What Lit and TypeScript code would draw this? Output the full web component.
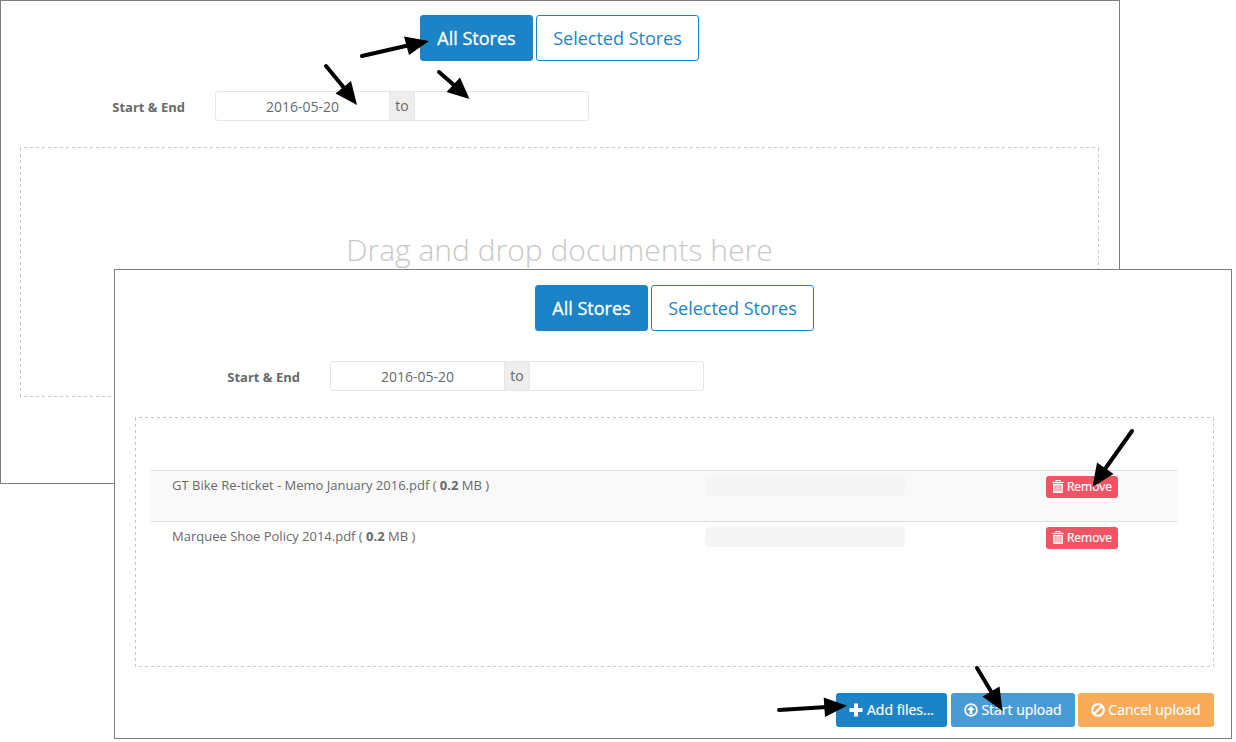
import { LitElement, html, css, svg, nothing } from "lit";
import { customElement, property } from "lit/decorators.js";

interface UploadFile {
  name: string;
  size: string;
}

const trashIcon = html`<svg class="icon" width="12" height="13" viewBox="0 0 12 13">
  <path d="M3.9 2V.5h4.2V2" fill="none" stroke="currentColor" />
  <path d="M.3 1.9h11.4V3H.3z" fill="currentColor" />
  <path d="M1 3.8h10l-.3 9.2H1.3z" fill="currentColor" />
  <path d="M3.1 5v6.6M5 5v6.6M7 5v6.6M8.9 5v6.6" stroke="#ed5565" stroke-width=".8" />
</svg>`;
const plusIcon = html`<svg class="icon" width="14" height="14" viewBox="0 0 14 14">
  <path d="M5 .5h4V5h4.5v4H9v4.5H5V9H.5V5H5z" fill="currentColor" />
</svg>`;
const uploadIcon = html`<svg class="icon" width="14" height="14" viewBox="0 0 14 14">
  <circle cx="7" cy="7" r="5.9" fill="none" stroke="currentColor" stroke-width="1.8" />
  <path d="M7 2.9 10.8 7H8.4v3.9H5.6V7H3.2z" fill="currentColor" />
</svg>`;
const banIcon = html`<svg class="icon" width="14" height="14" viewBox="0 0 14 14">
  <circle cx="7" cy="7" r="5.8" fill="none" stroke="currentColor" stroke-width="2.2" />
  <path d="M3.2 10.8 10.8 3.2" stroke="currentColor" stroke-width="2.2" />
</svg>`;

@customElement("upload-panel")
export class UploadPanel extends LitElement {
  @property({ attribute: false }) files: UploadFile[] = [];

  static styles = css`
    :host {
      display: block;
      box-sizing: border-box;
      border: 1px solid #7f7f7f;
      background: #fff;
      color: #676a6c;
      font: 13px/18.57px "Open Sans", sans-serif;
    }
    * { box-sizing: border-box; }
    .stores { display: flex; justify-content: center; gap: 3px; }
    button {
      font-family: inherit;
      margin: 0;
      padding: 0;
      border: 1px solid transparent;
      border-radius: 3px;
      color: #fff;
      display: flex;
      align-items: center;
      justify-content: center;
      white-space: nowrap;
      -webkit-text-stroke: 0.2px currentColor;
    }
    .store { height: 46px; width: 163px; font-size: 18px; background: #fff; color: #1c84c6; border-color: #1c84c6; -webkit-text-stroke: 0; }
    .store.active { width: 113px; background: #1c84c6; color: #fff; -webkit-text-stroke: 0.3px #fff; }
    .dates { display: flex; align-items: center; height: 30px; margin-top: 30px; }
    .label { width: 165px; text-align: right; font-weight: 700; margin-right: 30px; padding-top: 2px; }
    .range {
      display: flex;
      width: 374px;
      height: 30px;
      border: 1px solid #e5e6e7;
      border-radius: 3px;
      background: #fff;
      font-size: 14px;
      line-height: 28px;
      text-align: center;
    }
    .date { flex: 1; padding-top: 1px; }
    .to { width: 26px; background: #eee; border: solid #e5e6e7; border-width: 0 1px; }
    .zone {
      --across: repeating-linear-gradient(90deg, #c8c8c8 0 1px, transparent 1px 4px, #c8c8c8 4px 6px);
      --down: repeating-linear-gradient(180deg, transparent 0 1px, #c8c8c8 1px 4px, transparent 4px 6px);
      height: 250px;
      margin-top: 26px;
      background:
        var(--across) top / 100% 1px no-repeat,
        var(--across) bottom / 100% 1px no-repeat,
        var(--down) left / 1px 100% no-repeat,
        var(--down) right / 1px 100% no-repeat;
      padding: 53px 37px 0 16px;
    }
    .hint { text-align: center; font-size: 30px; line-height: 40px; font-weight: 300; color: #c8c8c8; padding: 30px 0 0 21px; }
    .row { display: grid; grid-template-columns: 554px 341px 1fr; height: 51px; border-top: 1px solid #ddd; padding-top: 5px; }
    .row:nth-child(odd) { background: #f9f9f9; }
    .name { padding-left: 21px; }
    .bar { width: 200px; height: 20px; border-radius: 4px; background: #f5f5f5; }
    .remove { width: 72px; height: 22px; font-size: 12px; gap: 3px; background: #ed5565; }
    .actions { display: flex; justify-content: flex-end; gap: 3px; margin-top: 26px; }
    .action { height: 34px; font-size: 14px; gap: 3px; }
    .add { width: 111px; background: #1c84c6; margin-right: 1px; gap: 4px; }
    .start { width: 124px; background: #499bd5; }
    .cancel { width: 136px; background: #f8ac59; }
    .icon { display: block; flex: none; }
    .remove .icon, .action .icon { margin-top: -1px; }
    .remove span, .action span { margin-top: -2px; }
  `;

  render() {
    const hasFiles = this.files.length > 0;
    return html`
      <div class="stores">
        <button class="store active">All Stores</button>
        <button class="store">Selected Stores</button>
      </div>
      <div class="dates">
        <div class="label">Start &amp; End</div>
        <div class="range">
          <div class="date">2016-05-20</div>
          <div class="to">to</div>
          <div class="date"></div>
        </div>
      </div>
      <div class="zone">
        ${hasFiles
          ? this.files.map(
              (f) => html`<div class="row">
                <div class="name">${f.name} ( <b>${f.size}</b> MB )</div>
                <div class="bar"></div>
                <button class="remove">${trashIcon}<span>Remove</span></button>
              </div>`
            )
          : html`<div class="hint">Drag and drop documents here</div>`}
      </div>
      ${hasFiles
        ? html`<div class="actions">
            <button class="action add">${plusIcon}<span>Add files...</span></button>
            <button class="action start">${uploadIcon}<span>Start upload</span></button>
            <button class="action cancel">${banIcon}<span>Cancel upload</span></button>
          </div>`
        : nothing}
    `;
  }
}

const arrows = [
  { line: "M362 56 410 45", head: "429,41 404,36.5 409,55" },
  { line: "M326 66 345 89", head: "357,105 351,81 335.5,93.5" },
  { line: "M439 72 455 86", head: "469.5,99 460,77.5 446.5,92" },
  { line: "M1132 431 1105 469", head: "1092.5,487 1097,462.5 1113.5,474" },
  { line: "M779 710 827 707", head: "847,705.7 823.7,697.5 825,717" },
  { line: "M977 668 992 693", head: "1002.5,711 982.5,696.5 999.5,686.5" },
];

@customElement("app-root")
export class AppRoot extends LitElement {
  private files: UploadFile[] = [
    { name: "GT Bike Re-ticket - Memo January 2016.pdf", size: "0.2" },
    { name: "Marquee Shoe Policy 2014.pdf", size: "0.2" },
  ];

  static styles = css`
    :host { display: block; position: relative; width: 1236px; height: 742px; overflow: hidden; background: #fff; }
    .back { position: absolute; left: 0; top: 0; width: 1120px; height: 484px; padding: 14px 20px 0 19px; }
    .front { position: absolute; left: 114px; top: 269px; width: 1118px; height: 470px; padding: 15px 17px 0 20px; }
    .arrows { position: absolute; left: 0; top: 0; pointer-events: none; }
  `;

  render() {
    return html`
      <upload-panel class="back"></upload-panel>
      <upload-panel class="front" .files=${this.files}></upload-panel>
      <svg class="arrows" width="1236" height="742" viewBox="0 0 1236 742">
        ${arrows.map(
          (a) => svg`<path d=${a.line} fill="none" stroke="#000" stroke-width="4" stroke-linecap="round" />
            <polygon points=${a.head} fill="#000" />`
        )}
      </svg>
    `;
  }
}
